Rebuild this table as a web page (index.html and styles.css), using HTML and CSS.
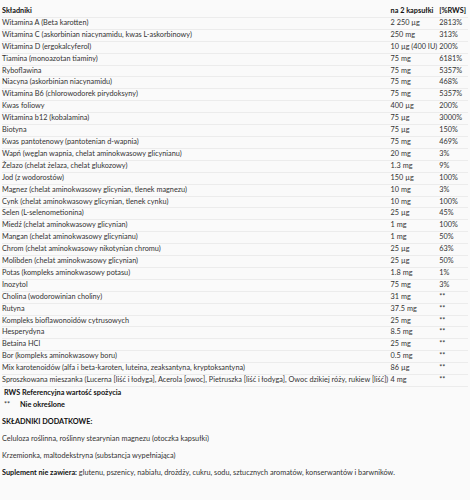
FILE: index.html
```html
<!DOCTYPE html>
<html lang="pl">
<head>
    <meta charset="UTF-8">
    <title>Skład</title>
    <link rel="stylesheet" href="styles.css">
</head>
<body>
    <table class="facts">
        <thead>
            <tr><th>Składniki</th><th>na 2 kapsułki</th><th>[%RWS]</th></tr>
        </thead>
        <tbody>
            <tr><td>Witamina A (Beta karotten)</td><td>2 250 µg</td><td>2813%</td></tr>
            <tr><td>Witamina C (askorbinian niacynamidu, kwas L-askorbinowy)</td><td>250 mg</td><td>313%</td></tr>
            <tr><td>Witamina D (ergokalcyferol)</td><td>10 µg (400 IU)</td><td>200%</td></tr>
            <tr><td>Tiamina (monoazotan tiaminy)</td><td>75 mg</td><td>6181%</td></tr>
            <tr><td>Ryboflawina</td><td>75 mg</td><td>5357%</td></tr>
            <tr><td>Niacyna (askorbinian niacynamidu)</td><td>75 mg</td><td>468%</td></tr>
            <tr><td>Witamina B6 (chlorowodorek pirydoksyny)</td><td>75 mg</td><td>5357%</td></tr>
            <tr><td>Kwas foliowy</td><td>400 µg</td><td>200%</td></tr>
            <tr><td>Witamina b12 (kobalamina)</td><td>75 µg</td><td>3000%</td></tr>
            <tr><td>Biotyna</td><td>75 µg</td><td>150%</td></tr>
            <tr><td>Kwas pantotenowy (pantotenian d-wapnia)</td><td>75 mg</td><td>469%</td></tr>
            <tr><td>Wapń (węglan wapnia, chelat aminokwasowy glicynianu)</td><td>20 mg</td><td>3%</td></tr>
            <tr><td>Żelazo (chelat żelaza, chelat glukozowy)</td><td>1.3 mg</td><td>9%</td></tr>
            <tr><td>Jod (z wodorostów)</td><td>150 µg</td><td>100%</td></tr>
            <tr><td>Magnez (chelat aminokwasowy glicynian, tlenek magnezu)</td><td>10 mg</td><td>3%</td></tr>
            <tr><td>Cynk (chelat aminokwasowy glicynian, tlenek cynku)</td><td>10 mg</td><td>100%</td></tr>
            <tr><td>Selen (L-selenometionina)</td><td>25 µg</td><td>45%</td></tr>
            <tr><td>Miedź (chelat aminokwasowy glicynian)</td><td>1 mg</td><td>100%</td></tr>
            <tr><td>Mangan (chelat aminokwasowy glicynianu)</td><td>1 mg</td><td>50%</td></tr>
            <tr><td>Chrom (chelat aminokwasowy nikotynian chromu)</td><td>25 µg</td><td>63%</td></tr>
            <tr><td>Molibden (chelat aminokwasowy glicynian)</td><td>25 µg</td><td>50%</td></tr>
            <tr><td>Potas (kompleks aminokwasowy potasu)</td><td>1.8 mg</td><td>1%</td></tr>
            <tr><td>Inozytol</td><td>75 mg</td><td>3%</td></tr>
            <tr><td>Cholina (wodorowinian choliny)</td><td>31 mg</td><td>**</td></tr>
            <tr><td>Rutyna</td><td>37.5 mg</td><td>**</td></tr>
            <tr><td>Kompleks bioflawonoidów cytrusowych</td><td>25 mg</td><td>**</td></tr>
            <tr><td>Hesperydyna</td><td>8.5 mg</td><td>**</td></tr>
            <tr><td>Betaina HCl</td><td>25 mg</td><td>**</td></tr>
            <tr><td>Bor (kompleks aminokwasowy boru)</td><td>0.5 mg</td><td>**</td></tr>
            <tr><td>Mix karotenoidów (alfa i beta-karoten, luteina, zeaksantyna, kryptoksantyna)</td><td>86 µg</td><td>**</td></tr>
            <tr><td>Sproszkowana mieszanka (Lucerna [liść i łodyga], Acerola [owoc], Pietruszka [liść i łodyga], Owoc dzikiej róży, rukiew [liść])</td><td>4 mg</td><td>**</td></tr>
        </tbody>
    </table>

    <div class="legend">
        <div class="legend-row"><b>RWS Referencyjna wartość spożycia</b></div>
        <div class="legend-row"><span class="mark">**</span><b>Nie określone</b></div>
    </div>

    <p class="extra-title">SKŁADNIKI DODATKOWE:</p>
    <p class="note">Celuloza roślinna, roślinny stearynian magnezu (otoczka kapsułki)</p>
    <p class="note">Krzemionka, maltodekstryna (substancja wypełniająca)</p>
    <p class="note"><b>Suplement nie zawiera:</b> glutenu, pszenicy, nabiału, drożdży, cukru, sodu, sztucznych aromatów, konserwantów i barwników.</p>
</body>
</html>
```

FILE: styles.css
```css
body {
    font-family: 'Lato', 'Liberation Sans', sans-serif;
    font-size: 7.3px;
    color: #333;
    background: #fafafa;
    margin: 0;
    padding: 6px 2px;
}

b, th {
    color: #111;
    font-weight: bold;
}

.facts {
    width: 100%;
    border-collapse: collapse;
}

.facts th,
.facts td {
    text-align: left;
    white-space: nowrap;
    padding: 1px 2px 1px 0;
    line-height: 8.9px;
    border-bottom: 1px solid #ececec;
}

.legend {
    margin-top: 0;
}

.legend-row {
    padding: 1px 2px;
    line-height: 10px;
}

.mark {
    display: inline-block;
    width: 16px;
}

.extra-title {
    font-weight: bold;
    color: #111;
    line-height: 10px;
    margin: 6px 0 0;
}

.note {
    line-height: 10px;
    margin: 7px 0 0;
}
```
